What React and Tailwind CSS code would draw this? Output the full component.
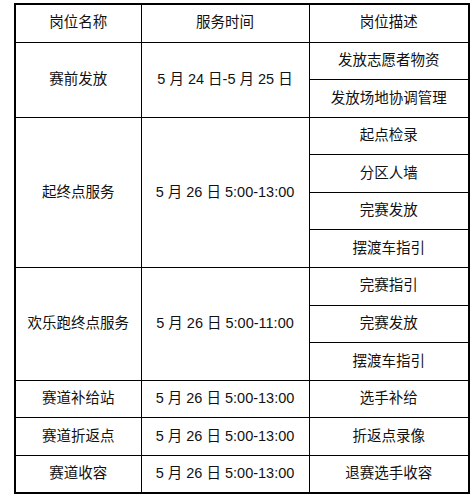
import React from "react";

const rows = [
  { name: "赛前发放", time: "5 月 24 日-5 月 25 日", tasks: ["发放志愿者物资", "发放场地协调管理"] },
  { name: "起终点服务", time: "5 月 26 日 5:00-13:00", tasks: ["起点检录", "分区人墙", "完赛发放", "摆渡车指引"] },
  { name: "欢乐跑终点服务", time: "5 月 26 日 5:00-11:00", tasks: ["完赛指引", "完赛发放", "摆渡车指引"] },
  { name: "赛道补给站", time: "5 月 26 日 5:00-13:00", tasks: ["选手补给"] },
  { name: "赛道折返点", time: "5 月 26 日 5:00-13:00", tasks: ["折返点录像"] },
  { name: "赛道收容", time: "5 月 26 日 5:00-13:00", tasks: ["退赛选手收容"] },
];

const cell = "border border-black text-center align-middle p-0";

function App() {
  return (
    <div
      className="w-[473px] h-[497px] bg-white pl-[14px] pt-[3px] text-[14.5px] text-[#111]"
      style={{ fontFamily: '"Liberation Sans", "Noto Sans CJK SC", sans-serif' }}
    >
      <table className="border-collapse border-2 border-black table-fixed w-[454px]">
        <colgroup>
          <col className="w-[126px]" />
          <col className="w-[168px]" />
          <col className="w-[160px]" />
        </colgroup>
        <thead>
          <tr className="h-[38px]">
            <th className={cell + " font-normal"}>岗位名称</th>
            <th className={cell + " font-normal"}>服务时间</th>
            <th className={cell + " font-normal"}>岗位描述</th>
          </tr>
        </thead>
        <tbody>
          {rows.map((r) =>
            r.tasks.map((t, i) => (
              <tr key={r.name + t} className="h-[37.6px]">
                {i === 0 && (
                  <td className={cell} rowSpan={r.tasks.length}>
                    {r.name}
                  </td>
                )}
                {i === 0 && (
                  <td className={cell} rowSpan={r.tasks.length}>
                    {r.time}
                  </td>
                )}
                <td className={cell}>{t}</td>
              </tr>
            ))
          )}
        </tbody>
      </table>
    </div>
  );
}

export default App;
